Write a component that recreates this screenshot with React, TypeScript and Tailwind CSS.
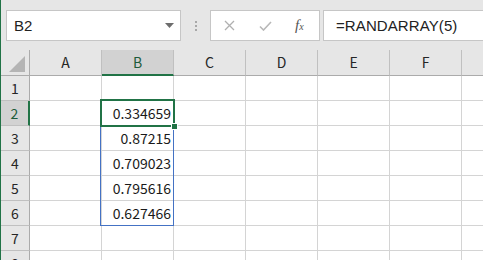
import React from 'react';

// Excel-style sheet: formula bar + grid with a spilled RANDARRAY

const COLS = ['A', 'B', 'C', 'D', 'E', 'F', ''];
const VALUES: Record<number, string> = {
  2: '0.334659',
  3: '0.87215',
  4: '0.709023',
  5: '0.795616',
  6: '0.627466',
};
const ROWS = [1, 2, 3, 4, 5, 6, 7, 8];

const gridFont = "font-['Noto_Sans_CJK_JP','Liberation_Sans',sans-serif]";

function FormulaBar() {
  return (
    <div className="flex h-[50px] items-start overflow-hidden pt-[10px] pl-[5px]">
      {/* Name box */}
      <div className="flex h-[31px] w-[175px] shrink-0 items-center justify-between border border-[#c6c6c6] bg-white pl-[7px] pr-[6px]">
        <span className="font-['Liberation_Sans',sans-serif] text-[15px] leading-none text-[#222]">B2</span>
        <svg width="9" height="5" viewBox="0 0 9 5">
          <path d="M0 0h9L4.5 5z" fill="#6d6d6d" />
        </svg>
      </div>
      {/* Separator dots */}
      <div className="flex h-[31px] w-[29px] shrink-0 flex-col items-center justify-center gap-[2px] pl-[1px]">
        <span className="h-[2px] w-[2px] bg-[#a8a8a8]" />
        <span className="h-[2px] w-[2px] bg-[#a8a8a8]" />
        <span className="h-[2px] w-[2px] bg-[#a8a8a8]" />
      </div>
      {/* Cancel / enter / fx */}
      <div className="flex h-[31px] w-[110px] shrink-0 items-center border border-[#c6c6c6] bg-white">
        <svg className="ml-[13px]" width="11" height="11" viewBox="0 0 11 11">
          <path d="M1 1l9 9M10 1l-9 9" stroke="#b0b0b0" strokeWidth="1.3" />
        </svg>
        <svg className="ml-[24px]" width="13" height="10" viewBox="0 0 13 10">
          <path d="M1 5.5l3.5 3.5L12 1" stroke="#b8b8b8" strokeWidth="1.6" fill="none" />
        </svg>
        <span className="ml-[23px] font-['Liberation_Serif',serif] italic text-[15px] leading-none text-[#555]">
          f<span className="text-[10px]">x</span>
        </span>
      </div>
      {/* Formula text */}
      <div className="ml-[3px] flex h-[31px] w-[200px] shrink-0 items-center border-y border-l border-[#c6c6c6] bg-white pl-[12px]">
        <span className="font-['Liberation_Sans',sans-serif] text-[15px] leading-none tracking-[0.1px] text-[#222]">
          =RANDARRAY(5)
        </span>
      </div>
    </div>
  );
}

function HeaderRow() {
  return (
    <div className="flex h-[26px]">
      <div className="relative h-[26px] w-[29px] shrink-0 border-r border-b border-[#ababab] bg-[#e6e6e6]">
        <svg className="absolute right-[4px] bottom-[3px]" width="16" height="16" viewBox="0 0 16 16">
          <path d="M16 0V16H0z" fill="#b4b4b4" />
        </svg>
      </div>
      {COLS.map((c) => {
        const sel = c === 'B';
        return (
          <div
            key={c || 'G'}
            className={`flex h-[26px] w-[72px] shrink-0 items-center justify-center border-r border-[#c0c0c0] text-[14px] ${
              sel
                ? 'border-b-2 border-b-[#217346] bg-[#d2d2d2] text-[#1d5c3a]'
                : 'border-b border-b-[#ababab] bg-[#e6e6e6] text-[#262626]'
            }`}
          >
            {c}
          </div>
        );
      })}
    </div>
  );
}

function Row({ n }: { n: number }) {
  const sel = n === 2;
  return (
    <div className="flex h-[25px]">
      <div
        className={`flex h-[25px] w-[29px] shrink-0 items-center justify-center border-b border-[#c0c0c0] text-[14px] ${
          sel
            ? 'border-r-2 border-r-[#217346] bg-[#d2d2d2] text-[#1d5c3a]'
            : 'border-r border-r-[#ababab] bg-[#e6e6e6] text-[#262626]'
        }`}
      >
        {n}
      </div>
      {COLS.map((c) => (
        <div
          key={c || 'G'}
          className="flex h-[25px] w-[72px] shrink-0 items-center justify-end border-r border-b border-[#d4d4d4] bg-white pr-[2px] text-[14px] text-[#1a1a1a]"
        >
          {c === 'B' ? VALUES[n] ?? '' : ''}
        </div>
      ))}
    </div>
  );
}

export default function App() {
  return (
    <div className="h-[260px] w-[483px] overflow-hidden border-l border-[#217346] bg-[#e6e6e6]">
      <FormulaBar />
      <div className={`relative ${gridFont}`}>
        <HeaderRow />
        {ROWS.map((n) => (
          <Row key={n} n={n} />
        ))}
        {/* Spill range B2:B6 */}
        <div className="pointer-events-none absolute left-[99px] top-[50px] h-[126px] w-[74px] border border-[#4472c4]" />
        {/* Active cell B2 */}
        <div className="pointer-events-none absolute left-[99px] top-[49px] h-[28px] w-[75px] border-2 border-[#217346]" />
        {/* Fill handle */}
        <div className="pointer-events-none absolute left-[170px] top-[73px] h-[7px] w-[7px] border border-white bg-[#217346]" />
      </div>
    </div>
  );
}
